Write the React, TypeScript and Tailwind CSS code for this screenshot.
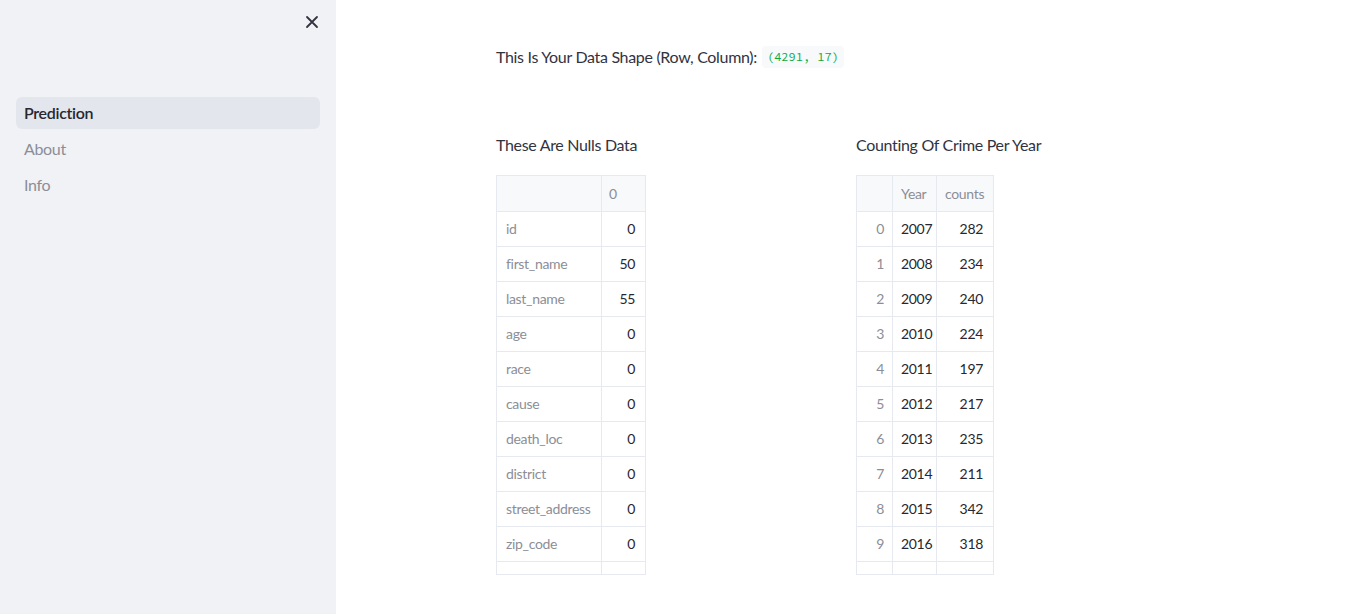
import React from "react";

const font = { fontFamily: '"Source Sans Pro", Lato, "Noto Sans", sans-serif' };

const nulls: [string, number][] = [
  ["id", 0],
  ["first_name", 50],
  ["last_name", 55],
  ["age", 0],
  ["race", 0],
  ["cause", 0],
  ["death_loc", 0],
  ["district", 0],
  ["street_address", 0],
  ["zip_code", 0],
  ["location", 0],
];

const years: [number, number, number][] = [
  [0, 2007, 282],
  [1, 2008, 234],
  [2, 2009, 240],
  [3, 2010, 224],
  [4, 2011, 197],
  [5, 2012, 217],
  [6, 2013, 235],
  [7, 2014, 211],
  [8, 2015, 342],
  [9, 2016, 318],
  [10, 2017, 290],
];

const Sidebar = () => {
  const links = ["Prediction", "About", "Info"];
  return (
    <aside className="w-[336px] shrink-0 bg-[#f0f2f6] px-4 pt-[14px]">
      <div className="flex justify-end pr-[1px]">
        <svg width="14" height="14" viewBox="0 0 14 14" className="mt-[1px]">
          <path d="M2 2 L12 12 M12 2 L2 12" stroke="#31333f" strokeWidth="1.8" strokeLinecap="round" />
        </svg>
      </div>
      <nav className="mt-[68px] flex flex-col gap-1">
        {links.map((l, i) => (
          <div
            key={l}
            className={
              i === 0
                ? "flex h-8 items-center rounded-md bg-[#e3e6ec] px-2 text-base font-semibold text-[#262730]"
                : "flex h-8 items-center rounded-md px-2 text-base text-[#8c8e97]"
            }
          >
            {l}
          </div>
        ))}
      </nav>
    </aside>
  );
};

const Th = ({ children, className = "" }: { children?: React.ReactNode; className?: string }) => (
  <div className={`flex h-[36px] items-center border-r border-b border-[#e6e9ef] bg-[#f8f9fb] px-2 text-sm text-[#8c8e97] ${className}`}>
    {children}
  </div>
);

const Td = ({ children, className = "" }: { children?: React.ReactNode; className?: string }) => (
  <div className={`flex h-[35px] items-center border-r border-b border-[#e6e9ef] pl-[9px] pr-2 text-sm ${className}`}>
    {children}
  </div>
);

const NullsTable = () => (
  <div className="h-[400px] w-[150px] overflow-hidden border border-[#e6e9ef] bg-white">
    <div className="grid grid-cols-[105px_44px]">
      <Th />
      <Th className="!px-[7px]">0</Th>
      {nulls.map(([k, v]) => (
        <React.Fragment key={k}>
          <Td className="text-[#8c8e97]">{k}</Td>
          <Td className="justify-end !pr-[10px] text-[#262730]">{v}</Td>
        </React.Fragment>
      ))}
    </div>
  </div>
);

const YearTable = () => (
  <div className="h-[400px] w-[138px] overflow-hidden border border-[#e6e9ef] bg-white">
    <div className="grid grid-cols-[36px_44px_57px]">
      <Th />
      <Th>Year</Th>
      <Th>counts</Th>
      {years.map(([i, y, c]) => (
        <React.Fragment key={i}>
          <Td className="justify-end text-[#8c8e97]">{i}</Td>
          <Td className="!pl-2 text-[#262730]">{y}</Td>
          <Td className="justify-end !pr-[10px] text-[#262730]">{c}</Td>
        </React.Fragment>
      ))}
    </div>
  </div>
);

export default function App() {
  return (
    <div className="flex h-[614px] w-full overflow-hidden bg-white tracking-[-0.02em] text-[#31333f]" style={font}>
      <Sidebar />
      <main className="flex-1 pl-[160px] pt-[45px]">
        <div className="flex items-center gap-[5px] text-base">
          <span>This Is Your Data Shape (Row, Column):</span>
          <code
            className="rounded bg-[#f8f9fb] px-[5px] py-[2px] text-[12px] tracking-normal text-[#09ab3b]"
            style={{ fontFamily: '"Source Code Pro", "DejaVu Sans Mono", monospace' }}
          >
            (4291, 17)
          </code>
        </div>
        <div className="mt-[64px] flex gap-[210px]">
          <section>
            <h3 className="text-base leading-[24px]">These Are Nulls Data</h3>
            <div className="mt-[18px]">
              <NullsTable />
            </div>
          </section>
          <section>
            <h3 className="text-base leading-[24px]">Counting Of Crime Per Year</h3>
            <div className="mt-[18px]">
              <YearTable />
            </div>
          </section>
        </div>
      </main>
    </div>
  );
}
